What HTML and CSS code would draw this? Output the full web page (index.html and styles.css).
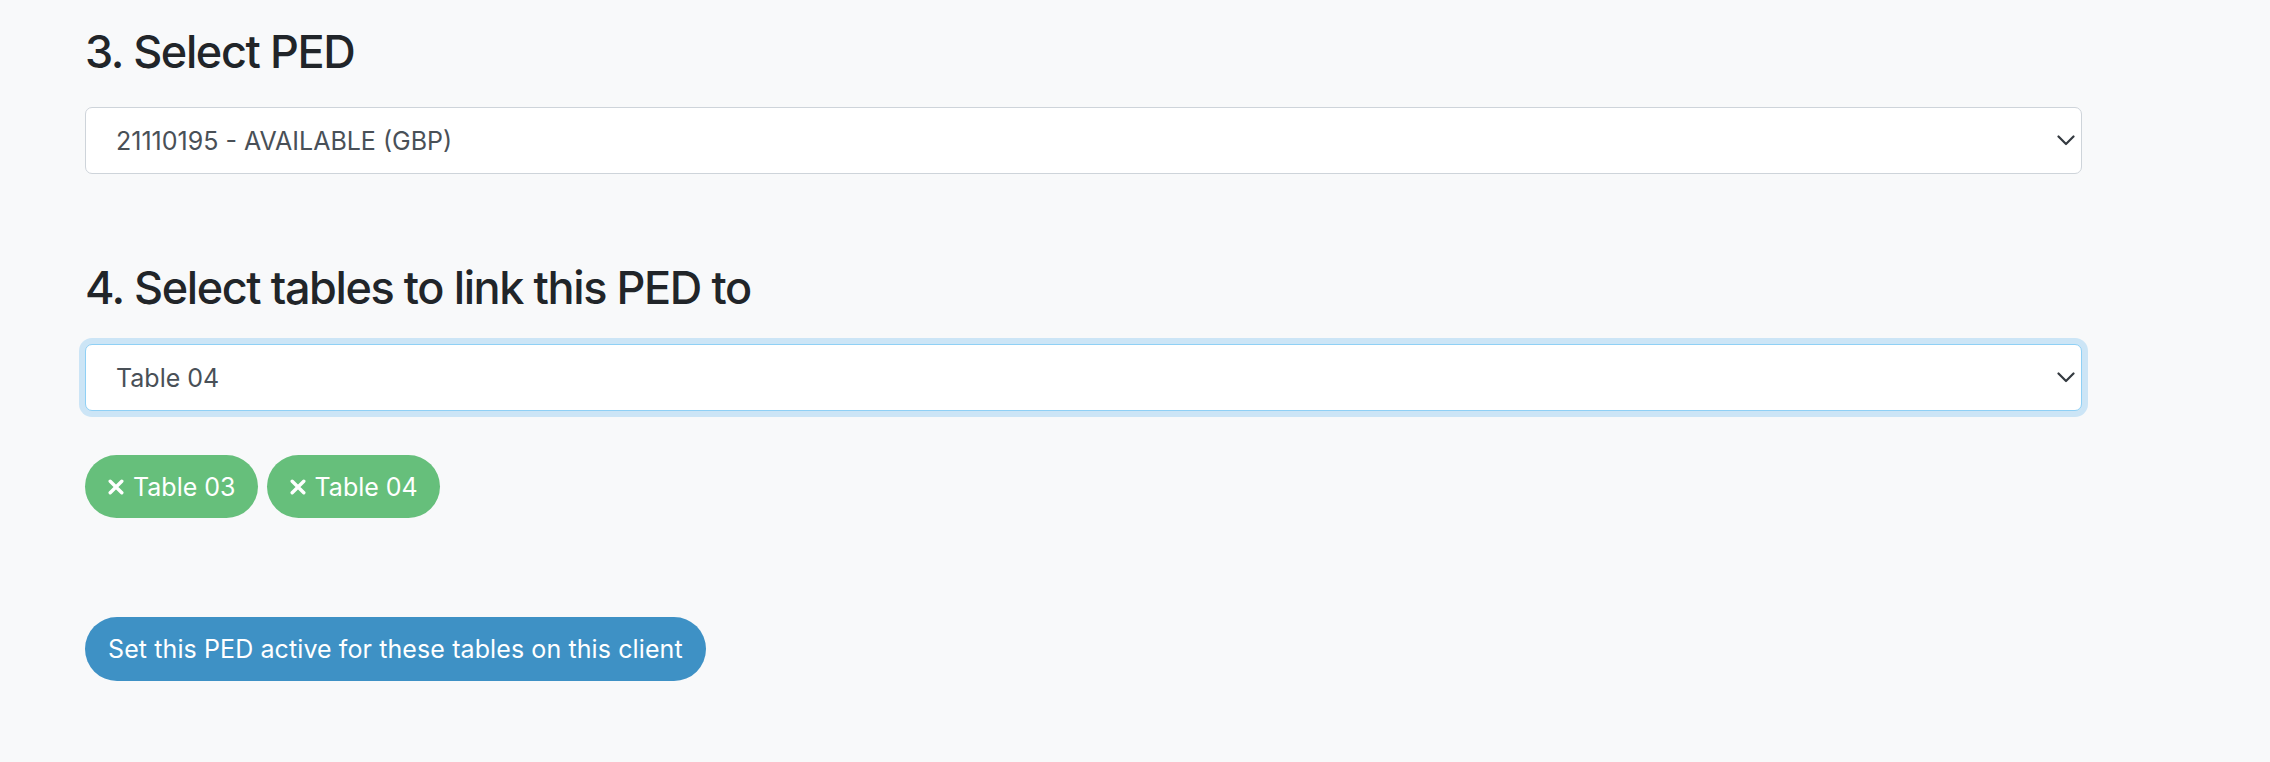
FILE: index.html
```html
<!DOCTYPE html>
<html lang="en">
<head>
<meta charset="utf-8">
<title>Select PED</title>
<link rel="stylesheet" href="styles.css">
</head>
<body>
<main class="page">
  <h3 class="step-title step-first">3. Select PED</h3>
  <div class="select-wrap">
    <select class="form-select">
      <option>21110195 - AVAILABLE (GBP)</option>
    </select>
    <svg class="chevron" viewBox="0 0 18 11" width="18" height="11" aria-hidden="true"><path d="M1.5 1.5 L9 9 L16.5 1.5" fill="none" stroke="#343a40" stroke-width="2.2" stroke-linecap="round" stroke-linejoin="round"/></svg>
  </div>

  <h3 class="step-title step-second">4. Select tables to link this PED to</h3>
  <div class="select-wrap">
    <select class="form-select is-focused">
      <option>Table 04</option>
    </select>
    <svg class="chevron" viewBox="0 0 18 11" width="18" height="11" aria-hidden="true"><path d="M1.5 1.5 L9 9 L16.5 1.5" fill="none" stroke="#343a40" stroke-width="2.2" stroke-linecap="round" stroke-linejoin="round"/></svg>
  </div>

  <div class="chips">
    <span class="chip"><svg class="chip-x" viewBox="0 0 16 16" width="16" height="16" aria-hidden="true"><path d="M2.2 2.2 L13.8 13.8 M13.8 2.2 L2.2 13.8" stroke="#fff" stroke-width="3.4" stroke-linecap="round"/></svg>Table 03</span>
    <span class="chip"><svg class="chip-x" viewBox="0 0 16 16" width="16" height="16" aria-hidden="true"><path d="M2.2 2.2 L13.8 13.8 M13.8 2.2 L2.2 13.8" stroke="#fff" stroke-width="3.4" stroke-linecap="round"/></svg>Table 04</span>
  </div>

  <button class="btn-primary" type="button">Set this PED active for these tables on this client</button>
</main>
</body>
</html>
```

FILE: styles.css
```css
html, body {
  margin: 0;
  padding: 0;
  background: #f8f9fa;
}

body {
  font-family: Inter, "Noto Sans", "Liberation Sans", sans-serif;
  color: #212529;
  width: 2270px;
  height: 762px;
  overflow: hidden;
}

.page {
  width: 1997px;
  margin-left: 85px;
  padding-top: 25px;
  display: flex;
  flex-direction: column;
  align-items: flex-start;
}

.step-title {
  margin: 0;
  font-size: 45px;
  line-height: 54px;
  font-weight: 500;
  color: #212529;
  letter-spacing: -1.4px;
}

.step-first {
  margin-bottom: 28px;
}

.step-second {
  margin-top: 87px;
  margin-bottom: 29px;
}

.select-wrap {
  position: relative;
  width: 100%;
}

.form-select {
  display: block;
  width: 100%;
  height: 67px;
  box-sizing: border-box;
  padding: 0 60px 0 30px;
  font-family: inherit;
  font-size: 25px;
  color: #495057;
  background: #fff;
  border: 1.5px solid #ced4da;
  border-radius: 7px;
  appearance: none;
  -webkit-appearance: none;
  outline: none;
}

.form-select.is-focused {
  border-color: #8fd0f5;
  box-shadow: 0 0 0 6px #cce5f6;
}

.chevron {
  position: absolute;
  right: 7px;
  top: 28px;
  pointer-events: none;
}

.chips {
  display: flex;
  gap: 9px;
  margin-top: 44px;
}

.chip {
  display: inline-flex;
  align-items: center;
  gap: 9px;
  height: 63px;
  box-sizing: border-box;
  padding: 0 22px 0 23px;
  border-radius: 32px;
  background: #66bf7b;
  color: #fff;
  font-size: 25px;
}

.chip-x {
  flex: none;
}

.btn-primary {
  margin-top: 99px;
  height: 64px;
  padding: 0 23px;
  border: none;
  border-radius: 32px;
  background: #3e91c5;
  color: #fff;
  font-family: inherit;
  font-size: 25px;
  letter-spacing: 0.1px;
  cursor: pointer;
}
```
